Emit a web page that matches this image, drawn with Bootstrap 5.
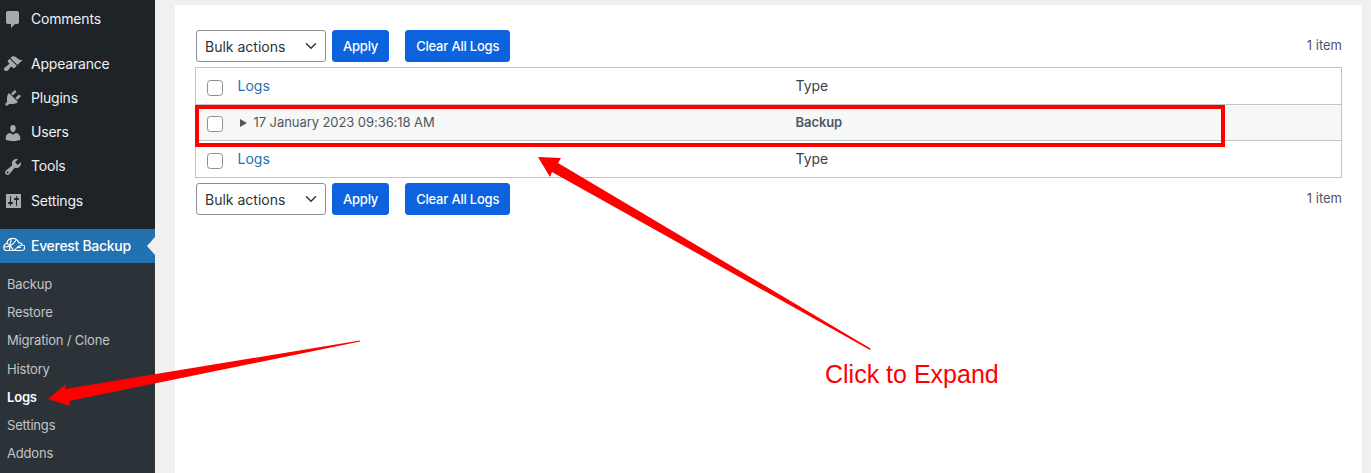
<!DOCTYPE html>
<html lang="en">
<head>
    <meta charset="UTF-8">
    <title>Everest Backup Logs</title>
    <link href="https://cdn.jsdelivr.net/npm/bootstrap@5.3.0/dist/css/bootstrap.min.css" rel="stylesheet">
    <style>
        html, body{
            height: 100%;
            overflow: hidden;
        }
        body{
            background: #f0f0f1;
            font-family: Inter, "Liberation Sans", sans-serif;
            font-size: 14px;
            color: #3c434a;
            position: relative;
        }
        .side-menu{
            width: 155px;
            height: 473px;
            background: #1d2327;
            padding-top: 2px;
        }
        .side-link{
            height: 34.2px;
            padding-left: 31px;
            padding-bottom: 2px;
            color: #f0f0f1;
            font-size: 14px;
            letter-spacing: -0.2px;
            text-decoration: none;
            position: relative;
        }
        .side-link svg{
            position: absolute;
            left: 3px;
            top: 7px;
            width: 20px;
            height: 20px;
            fill: #a7aaad;
        }
        .side-link .cloud-icon{
            left: 3px;
            top: 6px;
            width: 22px;
            fill: none;
            stroke: #fff;
            stroke-width: 1.2;
        }
        .side-gap{
            margin-top: 11px;
        }
        .side-active{
            background: #2271b1;
            color: #fff;
            font-weight: 500;
            letter-spacing: -0.3px;
        }
        .side-active::after{
            content: "";
            position: absolute;
            right: 0;
            top: 8px;
            border: 9px solid transparent;
            border-left-width: 0;
            border-right: 8px solid #f0f0f1;
        }
        .side-sub{
            background: #2c3338;
            padding-top: 7.3px;
            height: 210px;
        }
        .side-sub a{
            height: 28.2px;
            padding-left: 7px;
            color: #c3c4c7;
            font-size: 13px;
            letter-spacing: -0.18px;
            text-decoration: none;
        }
        .side-sub a.now{
            color: #fff;
            font-weight: 600;
        }
        .main-wrap{
            padding: 5px 9px 0 20px;
        }
        .white-panel{
            background: #fff;
            height: 468px;
            padding: 25px 20px 0;
        }
        .tool-row{
            height: 32px;
        }
        .tool-row .form-select{
            width: 130px;
            height: 32px;
            margin-left: 1px;
            padding: 0 24px 0 8px;
            font-size: 14px;
            color: #2c3338;
            border-color: #8c8f94;
            border-radius: 3px;
            background-position: right 6px center;
        }
        .tool-row .btn{
            height: 32px;
            padding: 1px 10px 0;
            font-size: 13px;
            font-weight: 500;
            letter-spacing: -0.2px;
            background: #0c63dd;
            border-color: #0c63dd;
            border-radius: 3px;
        }
        .apply-btn{
            margin-left: 6px;
        }
        .clear-btn{
            margin-left: 16px;
        }
        .item-count{
            font-size: 13px;
            color: #50575e;
        }
        .log-table{
            width: 1147px;
            margin: 5px 0;
            border: 1px solid #c3c4c7;
            table-layout: fixed;
        }
        .col-check{
            width: 42px;
        }
        .col-log{
            width: 558px;
        }
        .log-table td{
            padding: 0;
            border-color: #c3c4c7;
            vertical-align: middle;
            color: #3c434a;
            background: transparent;
        }
        .log-table tr:last-child td{
            border-bottom: 0;
        }
        .log-table .form-check-input{
            width: 16px;
            height: 16px;
            margin: 3px 0 0 11px;
            border-color: #8c8f94;
            display: block;
        }
        .log-table a{
            color: #2271b1;
            text-decoration: none;
        }
        .plain-row td{
            height: 37px;
        }
        .plain-row td:not(:first-child){
            padding-bottom: 2px;
        }
        .open-row td{
            height: 36px;
            background: #f6f7f7;
            font-size: 13px;
            letter-spacing: -0.07px;
            color: #50575e;
        }
        .tri{
            display: inline-block;
            border: 4px solid transparent;
            border-left: 7px solid #50575e;
            border-right: 0;
            margin: 0 7px 0 2px;
        }
        .note-layer{
            position: absolute;
            left: 0;
            top: 0;
            pointer-events: none;
        }
        .note-text{
            position: absolute;
            left: 825px;
            top: 360px;
            font-family: "Liberation Sans", Arial, sans-serif;
            font-size: 25px;
            line-height: 28px;
            color: #fe0000;
        }
    </style>
</head>
<body>
    <div class="d-flex">
        <div class="side-menu flex-shrink-0">
            <a class="side-link d-flex align-items-center" href="#">
                <svg viewBox="0 0 20 20"><path d="M5 2h9q.8 0 1.400.6T16 4v9q0 .8-.6 1.400T14 15h-2l-4 4v-4H5q-.8 0-1.400-.6T3 13V4q0-.8.6-1.400T5 2z"/></svg>
                Comments
            </a>
            <a class="side-link side-gap d-flex align-items-center" href="#">
                <svg viewBox="0 0 20 20"><path d="M14.48 11.06L7.41 3.99l1.5-1.5c.5-.56 2.3-.47 3.51.32 1.21.8 1.43 1.28 2.91 2.1 1.18.64 2.45 1.26 4.45.85zm-.71.71L6.7 4.7 4.93 6.47c-.39.39-.39 1.02 0 1.41l1.06 1.06c.39.39.39 1.03 0 1.42-.6.6-1.43 1.11-2.21 1.69-.35.26-.7.53-1.01.84C1.43 13.26 1 14.09 1 15c0 1.1.9 2 2 2 .91 0 1.74-.43 2.11-.8.31-.31.58-.66.84-1.01.58-.78 1.09-1.61 1.69-2.21.39-.39 1.03-.39 1.42 0l1.06 1.06c.39.39 1.02.39 1.41 0z"/></svg>
                Appearance
            </a>
            <a class="side-link d-flex align-items-center" href="#">
                <svg viewBox="0 0 20 20"><path d="M13.11 4.36L9.87 7.6 8 5.73l3.24-3.24c.35-.34 1.05-.2 1.56.32.52.51.66 1.21.31 1.55zm-8 1.77l.91-1.12 9.01 9.01-1.19.84c-.71.71-2.63 1.16-3.82 1.16H6.14L4.9 17.26c-.59.59-1.54.59-2.12 0-.59-.58-.59-1.53 0-2.12l1.24-1.24v-3.88c0-1.13.4-3.19 1.09-3.89zm7.26 3.97l3.24-3.24c.34-.35 1.04-.21 1.55.31.52.51.66 1.21.31 1.55l-3.24 3.25z"/></svg>
                Plugins
            </a>
            <a class="side-link d-flex align-items-center" href="#">
                <svg viewBox="0 0 20 20"><path d="M10 9.25c-2.27 0-2.73-3.44-2.73-3.44C7 4.02 7.82 2 9.97 2c2.16 0 2.98 2.02 2.71 3.81 0 0-.41 3.44-2.68 3.44zm0 2.57L12.72 10c2.39 0 4.52 2.33 4.52 4.53v2.49s-3.65 1.13-7.24 1.13c-3.65 0-7.24-1.13-7.24-1.13v-2.49c0-2.25 1.94-4.48 4.47-4.48z"/></svg>
                Users
            </a>
            <a class="side-link d-flex align-items-center" href="#">
                <svg viewBox="0 0 20 20"><path d="M16.68 9.77c-1.34 1.34-3.3 1.67-4.95.99l-5.41 6.52c-.99.99-2.59.99-3.58 0s-.99-2.59 0-3.57l6.52-5.42c-.68-1.65-.35-3.61.99-4.95 1.28-1.28 3.12-1.62 4.72-1.06l-2.89 2.89 2.82 2.82 2.86-2.87c.53 1.58.18 3.39-1.08 4.65zM3.81 16.21c.4.39 1.04.39 1.43 0 .4-.4.4-1.04 0-1.43-.39-.4-1.03-.4-1.43 0-.39.39-.39 1.03 0 1.43z"/></svg>
                Tools
            </a>
            <a class="side-link d-flex align-items-center" href="#">
                <svg viewBox="0 0 20 20"><path fill-rule="evenodd" d="M18 17V3H3v14h15zM8 11h1c.55 0 1 .45 1 1s-.45 1-1 1H8v1.5c0 .28-.22.5-.5.5s-.5-.22-.5-.5V13H6c-.55 0-1-.45-1-1s.45-1 1-1h1V5.5c0-.28.22-.5.5-.5s.5.22.5.5V11zm5-2h-1c-.55 0-1-.45-1-1s.45-1 1-1h1V5.5c0-.28.22-.5.5-.5s.5.22.5.5V7h1c.55 0 1 .45 1 1s-.45 1-1 1h-1v5.5c0 .28-.22.5-.5.5s-.5-.22-.5-.5V9z"/></svg>
                Settings
            </a>
            <a class="side-link side-gap side-active d-flex align-items-center" href="#">
                <svg class="cloud-icon" viewBox="0 0 22 20"><path d="M4 15.500h14.500c2 0 3.200-1.300 3.200-2.800 0-1.500-1.100-2.600-2.500-2.700-.3-1.500-1.700-2.500-3.200-2.200C14.700 5 12.500 3.300 9.700 3.300 6.700 3.300 4.400 5.300 3.800 8.200 2 8.800 .8 10.300 .8 12.200c0 1.900 1.400 3.300 3.200 3.300z"/><path d="M3.800 8.200c2.500 1.800 5.200 4.300 7.200 7.300M8.500 3.500c-1.200 3.500-2.200 8-2 12M1 12c4.500 0 9-2 12-6.800M11.500 15.500c2.500-3.500 5-5 7.700-5.500M15.500 13c.6-.8 1.800-1 2.500-.3"/></svg>
                Everest Backup
            </a>
            <div class="side-sub">
                <a class="d-flex align-items-center" href="#">Backup</a>
                <a class="d-flex align-items-center" href="#">Restore</a>
                <a class="d-flex align-items-center" href="#">Migration / Clone</a>
                <a class="d-flex align-items-center" href="#">History</a>
                <a class="d-flex align-items-center now" href="#">Logs</a>
                <a class="d-flex align-items-center" href="#">Settings</a>
                <a class="d-flex align-items-center" href="#">Addons</a>
            </div>
        </div>
        <div class="main-wrap flex-grow-1">
            <div class="white-panel">
                <div class="tool-row d-flex align-items-center">
                    <select class="form-select"><option>Bulk actions</option></select>
                    <button class="btn btn-primary apply-btn">Apply</button>
                    <button class="btn btn-primary clear-btn">Clear All Logs</button>
                    <span class="item-count ms-auto">1 item</span>
                </div>
                <table class="table log-table">
                    <colgroup>
                        <col class="col-check">
                        <col class="col-log">
                        <col>
                    </colgroup>
                    <tbody>
                        <tr class="plain-row">
                            <td><input class="form-check-input" type="checkbox"></td>
                            <td><a href="#">Logs</a></td>
                            <td>Type</td>
                        </tr>
                        <tr class="open-row">
                            <td><input class="form-check-input" type="checkbox"></td>
                            <td><span class="tri"></span>17 January 2023 09:36:18 AM</td>
                            <td class="fw-semibold">Backup</td>
                        </tr>
                        <tr class="plain-row">
                            <td><input class="form-check-input" type="checkbox"></td>
                            <td><a href="#">Logs</a></td>
                            <td>Type</td>
                        </tr>
                    </tbody>
                </table>
                <div class="tool-row d-flex align-items-center">
                    <select class="form-select"><option>Bulk actions</option></select>
                    <button class="btn btn-primary apply-btn">Apply</button>
                    <button class="btn btn-primary clear-btn">Clear All Logs</button>
                    <span class="item-count ms-auto">1 item</span>
                </div>
            </div>
        </div>
    </div>

    <svg class="note-layer" width="1371" height="473" viewBox="0 0 1371 473">
        <rect x="197" y="107" width="1026" height="38" fill="none" stroke="#fe0000" stroke-width="4"/>
        <polygon fill="#fe0000" points="870.500,348.500 870,350 552,172 550,177 538,157 561,158 558,163"/>
        <polygon fill="#fe0000" points="360,340.500 360,341.500 69,401 70,406 48,399 66,384 65,389"/>
    </svg>
    <div class="note-text">Click to Expand</div>

    <script src="https://cdn.jsdelivr.net/npm/bootstrap@5.3.0/dist/js/bootstrap.bundle.min.js"></script>
</body>
</html>
